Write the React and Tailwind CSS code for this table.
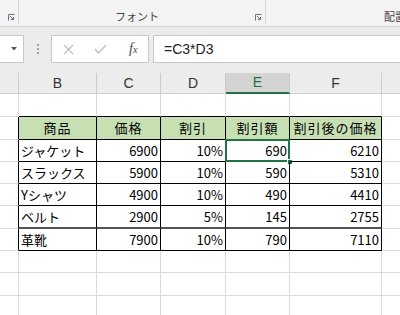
import React from 'react';

const cols = [
  { key: 'A', w: 'w-[19px]', label: '' },
  { key: 'B', w: 'w-[78px]', label: 'B' },
  { key: 'C', w: 'w-[64px]', label: 'C' },
  { key: 'D', w: 'w-[65px]', label: 'D' },
  { key: 'E', w: 'w-[64px]', label: 'E' },
  { key: 'F', w: 'w-[92px]', label: 'F' },
  { key: 'G', w: 'flex-1', label: '' },
];

const header = ['商品', '価格', '割引', '割引額', '割引後の価格'];

const items = [
  ['ジャケット', '6900', '10%', '690', '6210'],
  ['スラックス', '5900', '10%', '590', '5310'],
  ['Yシャツ', '4900', '10%', '490', '4410'],
  ['ベルト', '2900', '5%', '145', '2755'],
  ['革靴', '7900', '10%', '790', '7110'],
];

function Launcher() {
  return (
    <svg width="7" height="7" viewBox="0 0 7 7" className="text-gray-500">
      <path d="M0.5 6.5V0.5H6.5" fill="none" stroke="currentColor" />
      <path d="M2 2L5.5 5.5M3 5.5H5.5V3" fill="none" stroke="currentColor" />
    </svg>
  );
}

function Ribbon() {
  return (
    <div className="h-[27px] bg-[#f3f3f3] border-b border-[#d6d6d6] flex text-[11px] text-[#444]">
      <div className="w-[19px] h-[24px] border-r border-[#d4d4d4] flex items-end justify-end pr-[3px] pb-[3px]">
        <Launcher />
      </div>
      <div className="w-[247px] h-[24px] border-r border-[#d4d4d4] flex items-end pb-[1px] pr-[3px]">
        <span className="flex-1 text-center leading-none pb-[1px]">フォント</span>
        <span className="pb-[2px]"><Launcher /></span>
      </div>
      <div className="flex-1 h-[24px] flex items-end justify-end pb-[1px] overflow-hidden">
        <span className="leading-none pb-[1px] -mr-[6px] whitespace-nowrap">配置</span>
      </div>
    </div>
  );
}

function FormulaBar() {
  return (
    <div className="bg-[#ececec] pt-[8px] pb-[9px] flex items-stretch h-[45px]">
      <div className="w-[24px] bg-white border border-l-0 border-[#c8c8c8] flex items-center justify-end pr-[6px]">
        <svg width="6" height="4" viewBox="0 0 6 4"><path d="M0 0H6L3 3.5Z" fill="#555" /></svg>
      </div>
      <div className="w-[27px] flex flex-col items-center justify-center gap-[2px]">
        <span className="w-[2px] h-[2px] bg-[#a0a0a0]" />
        <span className="w-[2px] h-[2px] bg-[#a0a0a0]" />
        <span className="w-[2px] h-[2px] bg-[#a0a0a0]" />
      </div>
      <div className="w-[98px] bg-white border border-[#c8c8c8] flex items-center pl-[11px]">
        <svg width="11" height="11" viewBox="0 0 11 11" className="mr-[20px]">
          <path d="M1 1L10 10M10 1L1 10" stroke="#bdbdbd" strokeWidth="1.2" />
        </svg>
        <svg width="13" height="10" viewBox="0 0 13 10" className="mr-[22px]">
          <path d="M1 5L4.5 9L12 1" fill="none" stroke="#bdbdbd" strokeWidth="1.3" />
        </svg>
        <span className="text-[14px] italic text-[#444] font-['Liberation_Serif',serif] leading-none">
          f<span className="text-[10px]">x</span>
        </span>
      </div>
      <div className="w-[4px]" />
      <div className="flex-1 bg-white border border-r-0 border-[#c8c8c8] flex items-center pl-[10px] text-[14px] text-[#222] font-['Liberation_Sans',sans-serif]">
        =C3*D3
      </div>
    </div>
  );
}

function ColumnHeaders() {
  return (
    <div className="bg-[#ececec] pt-[1px]">
      <div className="flex h-[21px] text-[14px] font-['Liberation_Sans',sans-serif] text-[#333]">
        {cols.map((c, i) => (
          <div
            key={c.key}
            className={`${c.w} flex items-center justify-center border-[#cacaca] ${i < cols.length - 1 ? 'border-r' : ''} ${
              c.key === 'E' ? 'bg-[#d4d4d4] text-[#217346] border-b-2 border-b-[#217346]' : 'border-b border-b-[#d0d0d0]'
            }`}
          >
            {c.label}
          </div>
        ))}
      </div>
    </div>
  );
}

function Cell({ w, h, children, className = '' }) {
  return <div className={`${w} ${h} shrink-0 ${className}`}>{children}</div>;
}

function Sheet() {
  const grid = 'border-r border-b border-[#dadada]';
  const heights = ['h-[23px]', 'h-[23px]', 'h-[22px]', 'h-[22px]', 'h-[22px]', 'h-[23px]', 'h-[22px]', 'h-[22px]', 'h-[23px]', 'h-[22px]'];

  return (
    <div className="bg-white font-['Noto_Sans_CJK_JP',sans-serif] text-[13px] text-black">
      {heights.map((h, r) => {
        // r 0: above the table, r 1: table header, r 2..6: items, rest: empty rows
        const inTable = r >= 1 && r <= 6;
        const rowData = r === 1 ? header : r >= 2 && r <= 6 ? items[r - 2] : null;
        return (
          <div key={r} className="flex">
            {cols.map((c, ci) => {
              if (ci === 0) {
                return (
                  <Cell key={c.key} w={c.w} h={h} className={`border-b border-[#dadada] border-r ${inTable ? 'border-r-black' : ''}`} />
                );
              }
              if (ci === 6) {
                return <Cell key={c.key} w={c.w} h={h} className="border-b border-[#dadada]" />;
              }
              if (r === 0) {
                return <Cell key={c.key} w={c.w} h={h} className="border-r border-[#dadada] border-b border-b-black" />;
              }
              if (!inTable) {
                return <Cell key={c.key} w={c.w} h={h} className={grid} />;
              }
              const text = rowData[ci - 1];
              const isHead = r === 1;
              const align = isHead ? 'justify-center' : ci === 1 ? 'justify-start pl-[2px]' : 'justify-end pr-[2px]';
              const selected = r === 2 && ci === 4;
              return (
                <Cell
                  key={c.key}
                  w={c.w}
                  h={h}
                  className={`relative flex items-center whitespace-nowrap overflow-visible ${align} border-r border-b border-black ${
                    isHead ? 'bg-[#c6e0b4] tracking-[1px]' : ''
                  } ${r === 5 ? 'border-b-2 border-b-[#555]' : ''}`}
                >
                  {text}
                  {selected && (
                    <>
                      <span className="absolute -left-[1px] -top-[1px] -right-[1px] -bottom-[1px] border-2 border-[#217346]" />
                      <span className="absolute -right-[4px] -bottom-[4px] w-[6px] h-[6px] bg-[#217346] border border-white" />
                    </>
                  )}
                </Cell>
              );
            })}
          </div>
        );
      })}
    </div>
  );
}

export default function App() {
  return (
    <div className="w-[400px] h-[315px] overflow-hidden bg-white select-none font-['Noto_Sans_CJK_JP',sans-serif]">
      <Ribbon />
      <FormulaBar />
      <ColumnHeaders />
      <Sheet />
    </div>
  );
}
